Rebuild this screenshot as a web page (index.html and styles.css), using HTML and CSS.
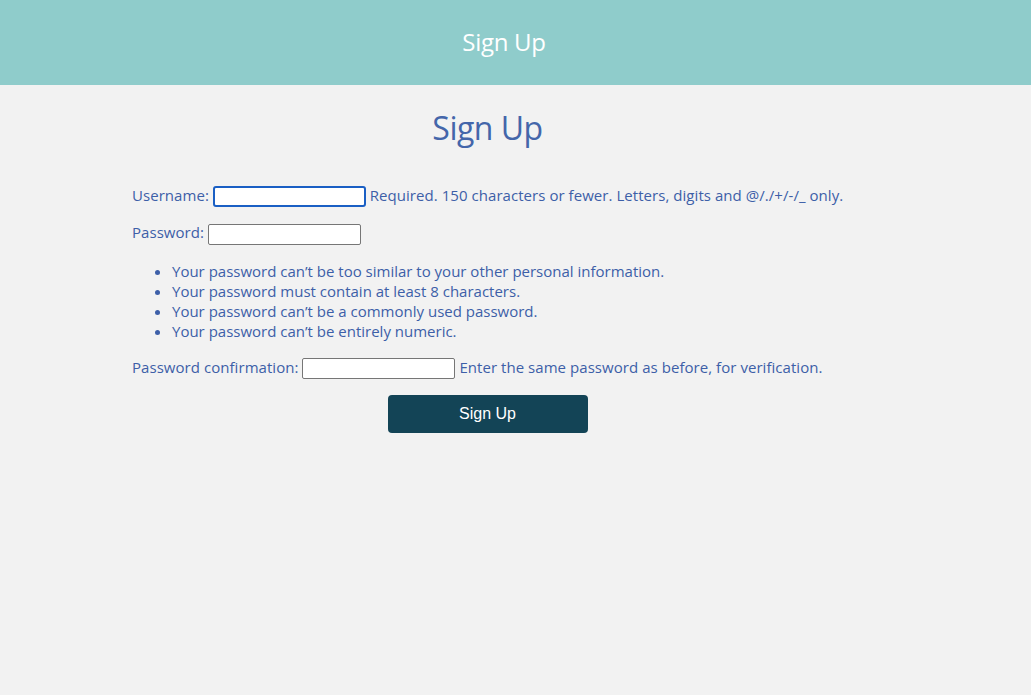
FILE: index.html
```html
<!DOCTYPE html>
<html lang="en">
<head>
<meta charset="utf-8">
<title>Sign Up</title>
<link rel="stylesheet" href="styles.css">
</head>
<body>
<header class="topbar"><span class="topbar-title">Sign Up</span></header>
<main class="content">
  <h1 class="page-title">Sign Up</h1>
  <form class="signup-form">
    <p class="field"><label>Username:</label> <input class="text-input focused" type="text"> <span class="help">Required. 150 characters or fewer. Letters, digits and @/./+/-/_ only.</span></p>
    <p class="field"><label>Password:</label> <input class="text-input" type="password"></p>
    <ul class="rules">
      <li>Your password can’t be too similar to your other personal information.</li>
      <li>Your password must contain at least 8 characters.</li>
      <li>Your password can’t be a commonly used password.</li>
      <li>Your password can’t be entirely numeric.</li>
    </ul>
    <p class="field"><label>Password confirmation:</label> <input class="text-input" type="password"> <span class="help">Enter the same password as before, for verification.</span></p>
    <div class="actions"><button type="button" class="submit">Sign Up</button></div>
  </form>
</main>
</body>
</html>
```
FILE: styles.css
```css
html, body {
  margin: 0;
  padding: 0;
  background: #f2f2f2;
}
body {
  font-family: "Open Sans", "Noto Sans", sans-serif;
  color: #3d5fa8;
  font-size: 15px;
}
.topbar {
  height: 85px;
  background: #8fcccb;
  display: flex;
  align-items: center;
  justify-content: center;
  padding-right: 23px;
}
.topbar-title {
  color: #ffffff;
  font-size: 24px;
  letter-spacing: -0.3px;
  position: relative;
  top: -1px;
}
.content {
  margin-left: 132px;
  width: 711px;
}
.page-title {
  margin: 21px 0 34px;
  text-align: center;
  font-weight: 400;
  font-size: 32px;
  line-height: 44px;
  color: #4466aa;
  letter-spacing: -0.5px;
}
.signup-form {
  margin: 0;
}
.field {
  margin: 0 0 14px;
  line-height: 22px;
  white-space: nowrap;
  letter-spacing: 0.05px;
}
.text-input {
  box-sizing: border-box;
  width: 153px;
  height: 21px;
  border: 1px solid #767676;
  border-radius: 2px;
  background: #fff;
  padding: 0 3px;
  vertical-align: middle;
  margin: 0;
}
.text-input.focused {
  border: 2px solid #1a5fc4;
  border-radius: 3px;
}
.rules {
  margin: 16px 0 15px;
  padding-left: 40px;
  line-height: 20px;
}
.actions {
  display: flex;
  justify-content: center;
  margin-top: 16px;
}
.submit {
  width: 200px;
  height: 38px;
  background: #134456;
  color: #fff;
  border: none;
  border-radius: 4px;
  font-family: "Liberation Sans", Arial, sans-serif;
  font-size: 16px;
}
```
